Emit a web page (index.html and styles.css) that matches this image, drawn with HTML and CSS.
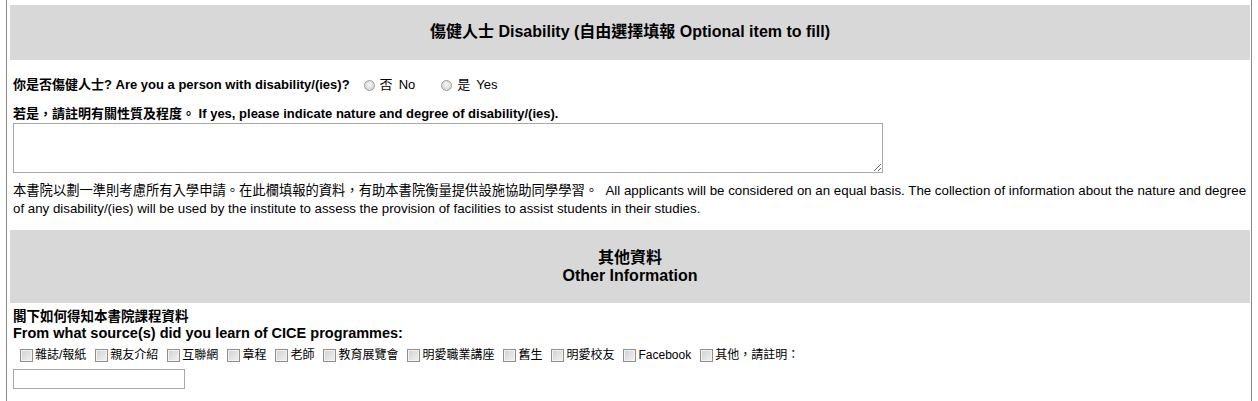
FILE: index.html
```html
<!DOCTYPE html>
<html lang="zh-Hant">

<head>
  <meta charset="UTF-8">
  <title>Application Form</title>
  <link rel="stylesheet" href="styles.css">
</head>

<body>
  <div id="frame">
    <div class="section-title">
      <h2>傷健人士 Disability (自由選擇填報 Optional item to fill)</h2>
    </div>

    <div class="row question">
      <b>你是否傷健人士? Are you a person with disability/(ies)?</b>
      <label class="opt"><input type="radio" name="disabled"><span>否</span><span>No</span></label>
      <label class="opt"><input type="radio" name="disabled"><span>是</span><span>Yes</span></label>
    </div>
    <div class="row label">
      <b>若是，請註明有關性質及程度。 If yes, please indicate nature and degree of disability/(ies).</b>
    </div>
    <textarea id="nature"></textarea>
    <p class="note">本書院以劃一準則考慮所有入學申請。在此欄填報的資料，有助本書院衡量提供設施協助同學學習。&nbsp; All applicants will be considered on an equal basis. The collection of information about the nature and degree of any disability/(ies) will be used by the institute to assess the provision of facilities to assist students in their studies.</p>

    <div class="section-title tall">
      <h2>其他資料<br>Other Information</h2>
    </div>

    <div class="source">
      <b class="zh">閣下如何得知本書院課程資料</b><br>
      <b class="en">From what source(s) did you learn of CICE programmes:</b>
    </div>
    <ul class="checks">
      <li><label><input type="checkbox">雜誌/報紙</label></li>
      <li><label><input type="checkbox">親友介紹</label></li>
      <li><label><input type="checkbox">互聯網</label></li>
      <li><label><input type="checkbox">章程</label></li>
      <li><label><input type="checkbox">老師</label></li>
      <li><label><input type="checkbox">教育展覽會</label></li>
      <li><label><input type="checkbox">明愛職業講座</label></li>
      <li><label><input type="checkbox">舊生</label></li>
      <li><label><input type="checkbox">明愛校友</label></li>
      <li><label><input type="checkbox">Facebook</label></li>
      <li><label><input type="checkbox">其他，請註明：</label></li>
    </ul>
    <input type="text" id="other">
  </div>
</body>

</html>
```

FILE: styles.css
```css
* {
  margin: 0;
  padding: 0;
}

body {
  font-family: "Liberation Sans", Arial, "Noto Sans CJK TC", sans-serif;
  font-size: 13px;
  color: #000000;
  background: #ffffff;
}

li {
  list-style: none;
}

#frame {
  margin: 0 6px;
  min-height: 401px;
  padding: 5px 1px 0 3px;
  border-left: 1px solid #8a8a8a;
  border-right: 1px solid #8a8a8a;
  box-sizing: border-box;
}

.section-title {
  background: #d8d8d8;
  height: 55px;
  display: flex;
  align-items: center;
  justify-content: center;
}

.section-title h2 {
  font-size: 16px;
  line-height: 18px;
  font-weight: bold;
  text-align: center;
  padding-bottom: 1px;
}

.section-title.tall {
  height: 73px;
  margin-top: 12px;
}

.section-title.tall h2 {
  padding-bottom: 0;
}

.row {
  height: 18px;
  line-height: 18px;
  padding-left: 3px;
  display: flex;
  align-items: center;
}

.question {
  margin-top: 16px;
}

.question b {
  margin-right: 14px;
}

.opt {
  display: inline-flex;
  align-items: center;
  gap: 5px;
  margin-right: 26px;
}

.opt span + span {
  margin-left: 1px;
}

.label {
  margin-top: 11px;
}

input[type="radio"] {
  appearance: none;
  width: 11px;
  height: 11px;
  border: 1px solid #9a9a9a;
  border-radius: 50%;
  background: radial-gradient(circle at 50% 40%, #f6f6f6, #cdcdcd);
}

#nature {
  display: block;
  margin: 0 0 0 3px;
  width: 870px;
  height: 50px;
  border: 1px solid #a9a9a9;
  box-sizing: border-box;
  resize: both;
}

.note {
  margin-top: 9px;
  padding-left: 3px;
  font-size: 13.3px;
  line-height: 18px;
}

.source {
  margin-top: 6px;
  padding-left: 3px;
  line-height: 16px;
}

.source .zh {
  font-size: 13.5px;
}

.source .en {
  font-size: 14.5px;
}

.checks {
  display: flex;
  margin-top: 4px;
  padding-left: 10px;
  height: 18px;
  font-size: 12px;
  line-height: 18px;
}

.checks li {
  display: flex;
  align-items: center;
  margin-right: 9px;
}

.checks label {
  display: inline-flex;
  align-items: center;
  gap: 2px;
}

input[type="checkbox"] {
  appearance: none;
  width: 13px;
  height: 13px;
  border: 1px solid #8e8f8f;
  background: linear-gradient(135deg, #d0d0d0, #f2f2f2);
  box-shadow: inset 0 0 0 1px #f2f2f2;
  box-sizing: border-box;
}

#other {
  display: block;
  margin: 5px 0 0 3px;
  width: 172px;
  height: 20px;
  border: 1px solid #a9a9a9;
  box-sizing: border-box;
}
```
